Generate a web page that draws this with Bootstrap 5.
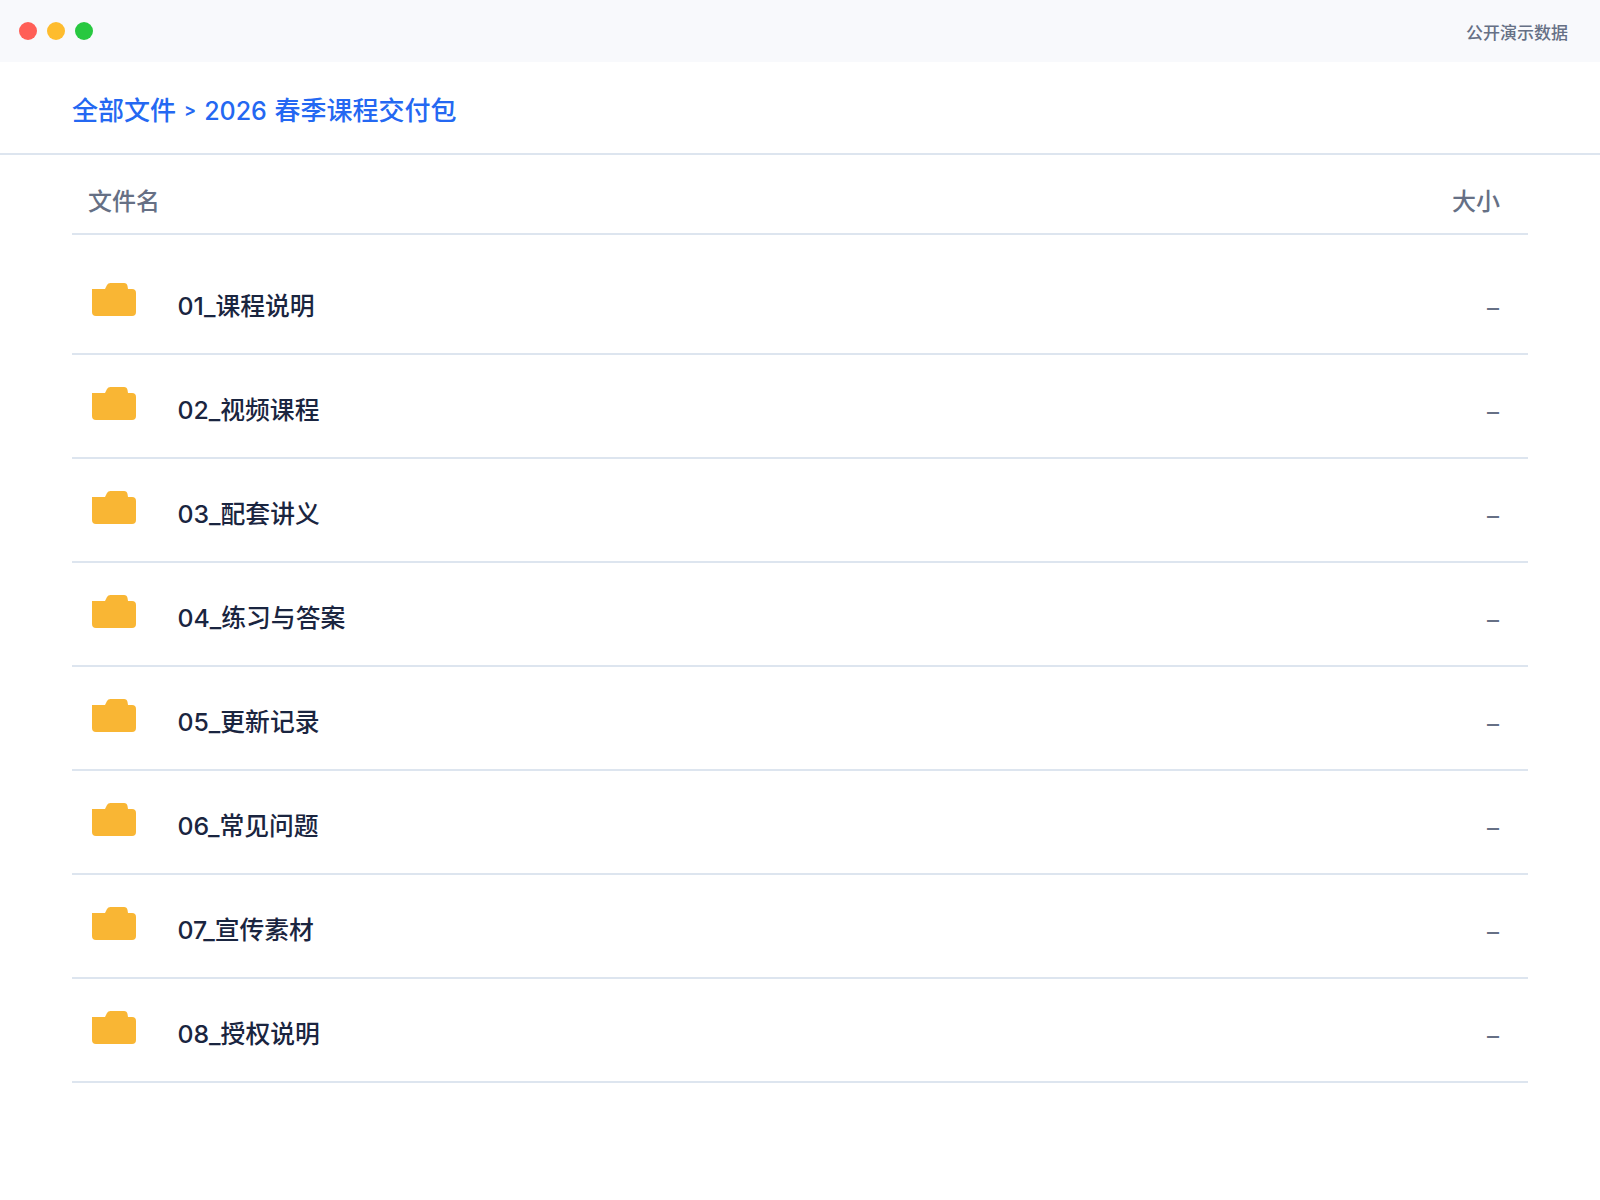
<!DOCTYPE html>
<html lang="zh-CN">
<head>
<meta charset="utf-8">
<title>2026 春季课程交付包</title>
<link href="https://cdn.jsdelivr.net/npm/bootstrap@5.3.0/dist/css/bootstrap.min.css" rel="stylesheet">
<style>
body{background:#fff;font-family:Inter,"Noto Sans CJK SC",sans-serif;color:#1a2540;}
.win-bar{height:62px;background:#f8f9fc;padding:0 32px 0 19px;}
.win-dots{gap:10px;}
.win-dot{width:18px;height:18px;border-radius:50%;}
.dot-r{background:#ff5f57;}.dot-y{background:#febc2e;}.dot-g{background:#28c840;}
.win-note{font-size:17px;color:#667085;font-weight:500;padding-top:6px;}
.crumb-bar{height:93px;padding:6px 72px 0;border-bottom:2px solid #dde5ef;}
.crumb-text{font-size:26px;color:#2468f2;font-weight:500;}
.crumb-sep{font-size:18px;font-weight:600;margin:0 8px;vertical-align:4px;}
.crumb-num{font-size:25px;margin-right:1px;}
.file-wrap{padding:0 72px;}
.file-head{height:80px;padding:15px 28px 0 16px;border-bottom:2px solid #dde5ef;color:#667085;font-size:24px;font-weight:500;}
.file-list{padding-top:16px;}
.file-row{height:104px;border-bottom:2px solid #dde5ef;padding:0 29px 0 20px;}
.file-icon{width:44px;height:33px;margin-right:41.500px;margin-top:-6px;flex:none;}
.file-name{font-size:24.800px;font-weight:500;color:#1a2540;margin-top:10px;}
.file-size{font-size:24px;color:#667085;margin-top:12px;}
</style>
</head>
<body>
<div class="win-bar d-flex align-items-center justify-content-between">
  <div class="d-flex win-dots"><span class="win-dot dot-r"></span><span class="win-dot dot-y"></span><span class="win-dot dot-g"></span></div>
  <div class="win-note">公开演示数据</div>
</div>
<div class="crumb-bar d-flex align-items-center">
  <div class="crumb-text">全部文件<span class="crumb-sep">&gt;</span><span class="crumb-num">2026 </span>春季课程交付包</div>
</div>
<div class="file-wrap">
  <div class="file-head d-flex align-items-center justify-content-between"><span>文件名</span><span>大小</span></div>
  <div class="file-list" id="rows">
    <div class="file-row d-flex align-items-center"><svg class="file-icon" viewBox="0 0 44 33"><path fill="#f9b634" d="M0 6H13L15 2Q16 0 18.500 0H32Q35 0 35.500 3L36 6H40Q44 6 44 10V29Q44 33 40 33H4Q0 33 0 29Z"/></svg><span class="file-name">01_课程说明</span><span class="file-size ms-auto">–</span></div>
    <div class="file-row d-flex align-items-center"><svg class="file-icon" viewBox="0 0 44 33"><path fill="#f9b634" d="M0 6H13L15 2Q16 0 18.500 0H32Q35 0 35.500 3L36 6H40Q44 6 44 10V29Q44 33 40 33H4Q0 33 0 29Z"/></svg><span class="file-name">02_视频课程</span><span class="file-size ms-auto">–</span></div>
    <div class="file-row d-flex align-items-center"><svg class="file-icon" viewBox="0 0 44 33"><path fill="#f9b634" d="M0 6H13L15 2Q16 0 18.500 0H32Q35 0 35.500 3L36 6H40Q44 6 44 10V29Q44 33 40 33H4Q0 33 0 29Z"/></svg><span class="file-name">03_配套讲义</span><span class="file-size ms-auto">–</span></div>
    <div class="file-row d-flex align-items-center"><svg class="file-icon" viewBox="0 0 44 33"><path fill="#f9b634" d="M0 6H13L15 2Q16 0 18.500 0H32Q35 0 35.500 3L36 6H40Q44 6 44 10V29Q44 33 40 33H4Q0 33 0 29Z"/></svg><span class="file-name">04_练习与答案</span><span class="file-size ms-auto">–</span></div>
    <div class="file-row d-flex align-items-center"><svg class="file-icon" viewBox="0 0 44 33"><path fill="#f9b634" d="M0 6H13L15 2Q16 0 18.500 0H32Q35 0 35.500 3L36 6H40Q44 6 44 10V29Q44 33 40 33H4Q0 33 0 29Z"/></svg><span class="file-name">05_更新记录</span><span class="file-size ms-auto">–</span></div>
    <div class="file-row d-flex align-items-center"><svg class="file-icon" viewBox="0 0 44 33"><path fill="#f9b634" d="M0 6H13L15 2Q16 0 18.500 0H32Q35 0 35.500 3L36 6H40Q44 6 44 10V29Q44 33 40 33H4Q0 33 0 29Z"/></svg><span class="file-name">06_常见问题</span><span class="file-size ms-auto">–</span></div>
    <div class="file-row d-flex align-items-center"><svg class="file-icon" viewBox="0 0 44 33"><path fill="#f9b634" d="M0 6H13L15 2Q16 0 18.500 0H32Q35 0 35.500 3L36 6H40Q44 6 44 10V29Q44 33 40 33H4Q0 33 0 29Z"/></svg><span class="file-name">07_宣传素材</span><span class="file-size ms-auto">–</span></div>
    <div class="file-row d-flex align-items-center"><svg class="file-icon" viewBox="0 0 44 33"><path fill="#f9b634" d="M0 6H13L15 2Q16 0 18.500 0H32Q35 0 35.500 3L36 6H40Q44 6 44 10V29Q44 33 40 33H4Q0 33 0 29Z"/></svg><span class="file-name">08_授权说明</span><span class="file-size ms-auto">–</span></div>
  </div>
</div>
<script src="https://cdn.jsdelivr.net/npm/bootstrap@5.3.0/dist/js/bootstrap.bundle.min.js"></script>
</body>
</html>
